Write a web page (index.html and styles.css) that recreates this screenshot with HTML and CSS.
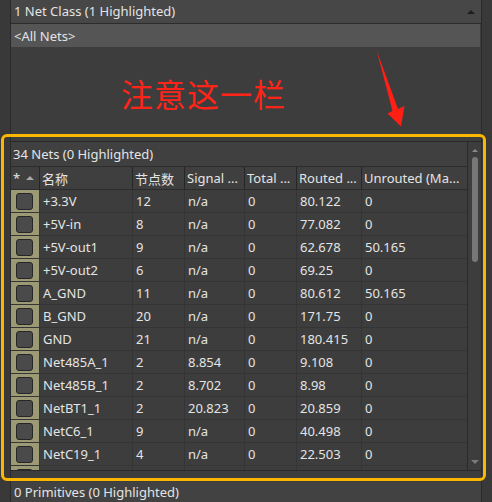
FILE: index.html
```html
<!DOCTYPE html>
<html>
<head>
<meta charset="utf-8">
<link rel="stylesheet" href="styles.css">
</head>
<body>
<div class="app">
  <div class="wrap">
    <div class="sec-head">
      <span>1 Net Class (1 Highlighted)</span>
      <span class="caret-up"></span>
    </div>
    <div class="allnets">&lt;All Nets&gt;</div>
    <div class="note-area">
      <div class="note">注意这一栏</div>
    </div>
    <div class="panel">
      <div class="panel-main">
        <div class="panel-title">34 Nets (0 Highlighted)</div>
        <div class="row head">
          <div class="cell c0">* <span class="sort"></span></div>
          <div class="cell">名称</div>
          <div class="cell">节点数</div>
          <div class="cell">Signal ...</div>
          <div class="cell">Total ...</div>
          <div class="cell">Routed ...</div>
          <div class="cell">Unrouted (Ma...</div>
        </div>
        <div class="row"><div class="cell c0"><span class="chk"></span></div><div class="cell">+3.3V</div><div class="cell">12</div><div class="cell">n/a</div><div class="cell">0</div><div class="cell">80.122</div><div class="cell">0</div></div>
        <div class="row"><div class="cell c0"><span class="chk"></span></div><div class="cell">+5V-in</div><div class="cell">8</div><div class="cell">n/a</div><div class="cell">0</div><div class="cell">77.082</div><div class="cell">0</div></div>
        <div class="row"><div class="cell c0"><span class="chk"></span></div><div class="cell">+5V-out1</div><div class="cell">9</div><div class="cell">n/a</div><div class="cell">0</div><div class="cell">62.678</div><div class="cell">50.165</div></div>
        <div class="row"><div class="cell c0"><span class="chk"></span></div><div class="cell">+5V-out2</div><div class="cell">6</div><div class="cell">n/a</div><div class="cell">0</div><div class="cell">69.25</div><div class="cell">0</div></div>
        <div class="row"><div class="cell c0"><span class="chk"></span></div><div class="cell">A_GND</div><div class="cell">11</div><div class="cell">n/a</div><div class="cell">0</div><div class="cell">80.612</div><div class="cell">50.165</div></div>
        <div class="row"><div class="cell c0"><span class="chk"></span></div><div class="cell">B_GND</div><div class="cell">20</div><div class="cell">n/a</div><div class="cell">0</div><div class="cell">171.75</div><div class="cell">0</div></div>
        <div class="row"><div class="cell c0"><span class="chk"></span></div><div class="cell">GND</div><div class="cell">21</div><div class="cell">n/a</div><div class="cell">0</div><div class="cell">180.415</div><div class="cell">0</div></div>
        <div class="row"><div class="cell c0"><span class="chk"></span></div><div class="cell">Net485A_1</div><div class="cell">2</div><div class="cell">8.854</div><div class="cell">0</div><div class="cell">9.108</div><div class="cell">0</div></div>
        <div class="row"><div class="cell c0"><span class="chk"></span></div><div class="cell">Net485B_1</div><div class="cell">2</div><div class="cell">8.702</div><div class="cell">0</div><div class="cell">8.98</div><div class="cell">0</div></div>
        <div class="row"><div class="cell c0"><span class="chk"></span></div><div class="cell">NetBT1_1</div><div class="cell">2</div><div class="cell">20.823</div><div class="cell">0</div><div class="cell">20.859</div><div class="cell">0</div></div>
        <div class="row"><div class="cell c0"><span class="chk"></span></div><div class="cell">NetC6_1</div><div class="cell">9</div><div class="cell">n/a</div><div class="cell">0</div><div class="cell">40.498</div><div class="cell">0</div></div>
        <div class="row"><div class="cell c0"><span class="chk"></span></div><div class="cell">NetC19_1</div><div class="cell">4</div><div class="cell">n/a</div><div class="cell">0</div><div class="cell">22.503</div><div class="cell">0</div></div>
        <div class="row partial"><div class="cell c0"><span class="chk"></span></div><div class="cell"></div><div class="cell"></div><div class="cell"></div><div class="cell"></div><div class="cell"></div><div class="cell"></div></div>
      </div>
      <div class="scrollbar">
        <span class="sb-up"></span>
        <span class="sb-thumb"></span>
        <span class="sb-down"></span>
      </div>
    </div>
    <div class="gap"></div>
    <div class="foot">0 Primitives (0 Highlighted)</div>
  </div>
  <div class="highlight"></div>
  <svg class="arrow" width="492" height="502" viewBox="0 0 492 502">
    <polygon points="376.5,50 398,109 404.5,106 401,126.5 387.5,113.5 392.5,111" fill="#ff1f14"/>
  </svg>
</div>
</body>
</html>
```

FILE: styles.css
```css
* { box-sizing: border-box; }
html, body { margin: 0; padding: 0; }
body {
  background: #393939;
  font-family: "Noto Sans", "Noto Sans CJK SC", sans-serif;
  font-size: 13px;
  color: #e4e4e4;
}
.app {
  position: relative;
  width: 492px;
  height: 502px;
  overflow: hidden;
}
.wrap {
  margin-left: 10px;
  width: 472px;
  height: 502px;
  background: #3d3d3d;
  border-left: 1px solid #2a2a2a;
  border-right: 1px solid #2a2a2a;
  display: flex;
  flex-direction: column;
}
.sec-head {
  height: 24px;
  background: #474747;
  border-bottom: 1px solid #2c2c2c;
  display: flex;
  align-items: center;
  justify-content: space-between;
  padding: 0 6px 0 3px;
  line-height: 1;
}
.caret-up {
  width: 0;
  height: 0;
  border-left: 4px solid transparent;
  border-right: 4px solid transparent;
  border-bottom: 4px solid #1e1e1e;
}
.allnets {
  height: 23px;
  background: #555555;
  display: flex;
  align-items: center;
  padding-left: 3px;
  margin-right: 1px;
}
.note-area {
  height: 94px;
  padding: 26px 0 0 110px;
}
.note {
  color: #ff2418;
  font-family: "Noto Sans CJK SC", sans-serif;
  font-size: 32px;
  line-height: 40px;
  letter-spacing: 1px;
}
.panel {
  height: 330px;
  border-top: 1px solid #2a2a2a;
  border-bottom: 1px solid #2a2a2a;
  display: flex;
}
.panel-main {
  width: 457px;
  overflow: hidden;
  border-right: 1px solid #2a2a2a;
  display: flex;
  flex-direction: column;
}
.panel-title {
  height: 25px;
  flex: none;
  background: #404040;
  border-bottom: 1px solid #2c2c2c;
  display: flex;
  align-items: center;
  padding-left: 2px;
}
.row {
  display: grid;
  grid-template-columns: 29px 93px 52px 60px 52px 65px 106px;
  height: 23px;
  flex: none;
  border-bottom: 1px solid #353535;
}
.row.partial { height: 5px; border-bottom: none; }
.row.head {
  background: #3f3f3f;
  border-bottom: 1px solid #2c2c2c;
}
.cell {
  border-right: 1px solid #353535;
  padding-left: 3px;
  display: flex;
  align-items: center;
  white-space: nowrap;
  overflow: hidden;
}
.row.head .cell { border-right: 1px solid #262626; padding-left: 2px; }
.row.head .cell:last-child { border-right: none; }
.row .cell:last-child { border-right: none; }
.row.head .c0 { background: transparent; padding-left: 2px; gap: 6px; }
.c0 {
  background: #9b9a74;
  padding-left: 5px;
  align-items: flex-start;
  padding-top: 3px;
}
.row.head .c0 { align-items: center; padding-top: 0; }
.sort {
  width: 0;
  height: 0;
  border-left: 4px solid transparent;
  border-right: 4px solid transparent;
  border-bottom: 4px solid #a8a8a8;
}
.chk {
  width: 17px;
  height: 17px;
  flex: none;
  background: #4a4a4a;
  border: 1px solid #262626;
  border-radius: 3px;
}
.scrollbar {
  flex: 1;
  position: relative;
  display: flex;
  flex-direction: column;
  align-items: center;
  padding-top: 7px;
}
.sb-up {
  width: 0;
  height: 0;
  border-left: 3px solid transparent;
  border-right: 3px solid transparent;
  border-bottom: 3px solid #8a8a8a;
}
.sb-thumb {
  margin-top: 5px;
  width: 6px;
  height: 105px;
  background: #777777;
  border-radius: 3px;
}
.sb-down {
  margin-top: auto;
  margin-bottom: 6px;
  width: 0;
  height: 0;
  border-left: 4px solid transparent;
  border-right: 4px solid transparent;
  border-top: 4px solid #7a7a7a;
}
.gap { height: 11px; flex: none; }
.foot {
  flex: 1;
  background: #424242;
  display: flex;
  align-items: center;
  padding-left: 3px;
}
.highlight {
  position: absolute;
  left: 1px;
  top: 134px;
  width: 485px;
  height: 347px;
  border: 3.5px solid #fbb700;
  border-radius: 6px;
  pointer-events: none;
}
.arrow {
  position: absolute;
  left: 0;
  top: 0;
  pointer-events: none;
}
```
